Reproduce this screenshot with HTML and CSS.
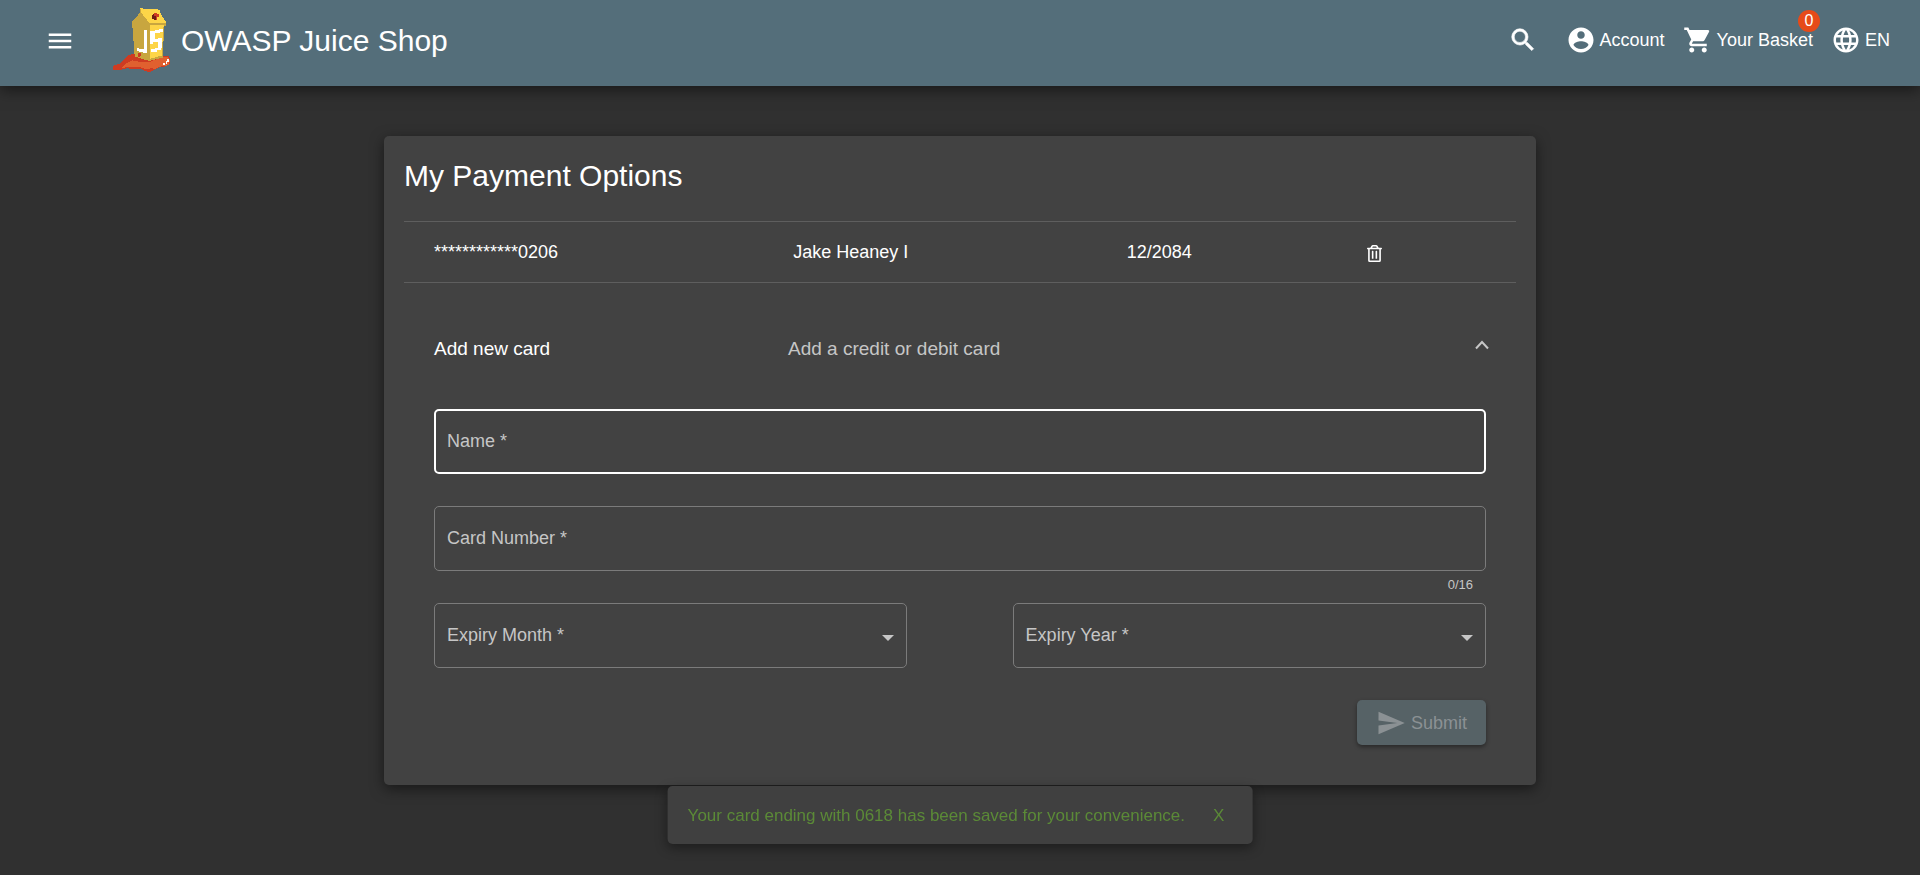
FILE: index.html
```html
<!DOCTYPE html>
<html lang="en">
<head>
<meta charset="utf-8">
<title>OWASP Juice Shop</title>
<link rel="stylesheet" href="styles.css">
</head>
<body>
<header class="toolbar">
  <button class="icon-button menu-button" type="button" aria-label="Open sidenav">
    <svg class="icon" viewBox="0 0 24 24"><path d="M3 18h18v-2H3v2zm0-5h18v-2H3v2zm0-7v2h18V6H3z"/></svg>
  </button>
  <a class="brand" href="#">
    <svg class="logo" viewBox="36 21 180 198" shape-rendering="crispEdges">
      <path fill="#ce3b22" d="M39 198L60 190 72 178 84 165 104 162 148 176 188 167 205 168 211 180 209 192 198 199 178 202 162 210 150 217 138 214 125 208 80 205 60 210 39 210z"/>
      <path fill="#e0602f" d="M62 205L74 194 84 187 98 180 104 184 148 186 190 170 203 170 210 182 205 196 180 200 162 208 156 204 140 208 120 202 90 200z"/>
      <path fill="#fff" d="M201 177h6v9h-6v6h-3v-9h3zM189 190h6v4h-6z"/>
      <path fill="#c8a63f" d="M122 36L97 64 98 100 102 135 104 170 148 183 152 72z"/>
      <path fill="#fdd548" d="M121 24h9v3h45v3h6v9L192 57 198 66V72H147L126 45 121 38z"/>
      <path fill="#c8a63f" d="M121 27h3v12l25 31h48v7h-4L188 173 148 183V72L119 42z"/>
      <path fill="#fdd548" d="M151 74H191L185 167 151 176z"/>
      <path fill="#ce3b22" d="M162 39h8v3h6v10h-5v7h-9v-3h-6V45h6zM114 160h8v3h2v6h-3v3h-6z"/>
      <path fill="#6d1e14" d="M159 43h4v6h6v10h-7v-3h-6V46h3z"/>
      <path fill="#fff" d="M132 90h9v69h-12v-3h-11v-3h-6v-9h6v3h14zM158 92h6v-3h12v-3h12v10h-9v3h-15v17h9v-3h12v6h1v25h-4v6h-12v6h-17v-9h12v-3h9v-18h-15v6h-9V93h4z"/>
    </svg>
    <span class="brand-name">OWASP Juice Shop</span>
  </a>
  <nav class="actions">
    <button class="icon-button search-button" type="button" aria-label="Search">
      <svg class="icon" viewBox="0 0 24 24"><path stroke="currentColor" stroke-width=".5" d="M15.500 14h-.79l-.28-.27A6.471 6.471 0 0 0 16 9.500 6.500 6.500 0 1 0 9.500 16c1.610 0 3.090-.59 4.230-1.570l.27.28v.79l5 4.990L20.490 19l-4.990-5zm-6 0C7.010 14 5 11.990 5 9.500S7.010 5 9.500 5 14 7.010 14 9.500 11.990 14 9.500 14z"/></svg>
    </button>
    <button class="action" type="button">
      <svg class="icon" viewBox="0 0 24 24"><path d="M12 2C6.480 2 2 6.480 2 12s4.480 10 10 10 10-4.480 10-10S17.520 2 12 2zm0 3c1.660 0 3 1.340 3 3s-1.340 3-3 3-3-1.340-3-3 1.340-3 3-3zm0 14.200c-2.500 0-4.710-1.280-6-3.220.03-1.990 4-3.080 6-3.080 1.990 0 5.970 1.090 6 3.080-1.290 1.940-3.500 3.220-6 3.220z"/></svg>
      <span>Account</span>
    </button>
    <button class="action" type="button">
      <svg class="icon" viewBox="0 0 24 24"><path d="M7 18c-1.100 0-1.990.9-1.990 2S5.900 22 7 22s2-.9 2-2-.9-2-2-2zM1 2v2h2l3.600 7.590-1.350 2.450c-.16.28-.25.61-.25.96 0 1.100.9 2 2 2h12v-2H7.420c-.14 0-.25-.11-.25-.25l.03-.12.9-1.630h7.450c.75 0 1.410-.41 1.750-1.030l3.580-6.490A1.003 1.003 0 0 0 20 4H5.210l-.94-2H1zm16 16c-1.100 0-1.990.9-1.990 2s.89 2 1.990 2 2-.9 2-2-.9-2-2-2z"/></svg>
      <span class="basket-label">Your Basket<span class="badge">0</span></span>
    </button>
    <button class="action" type="button">
      <svg class="icon" viewBox="0 0 24 24"><path d="M11.990 2C6.470 2 2 6.480 2 12s4.470 10 9.990 10C17.520 22 22 17.520 22 12S17.520 2 11.990 2zm6.930 6h-2.950a15.650 15.650 0 0 0-1.380-3.560A8.030 8.030 0 0 1 18.920 8zM12 4.040c.83 1.200 1.480 2.530 1.910 3.960h-3.820c.43-1.430 1.080-2.760 1.910-3.960zM4.260 14C4.100 13.360 4 12.690 4 12s.1-1.360.26-2h3.380c-.08.66-.14 1.320-.14 2s.06 1.340.14 2H4.260zm.82 2h2.950c.32 1.250.78 2.450 1.380 3.560A7.987 7.987 0 0 1 5.080 16zm2.950-8H5.080a7.987 7.987 0 0 1 4.330-3.560A15.650 15.650 0 0 0 8.030 8zM12 19.960c-.83-1.200-1.480-2.530-1.910-3.960h3.820c-.43 1.430-1.080 2.760-1.910 3.960zM14.340 14H9.660c-.09-.66-.16-1.320-.16-2s.07-1.350.16-2h4.680c.09.65.16 1.320.16 2s-.07 1.340-.16 2zm.25 5.560c.6-1.110 1.060-2.310 1.380-3.560h2.950a8.030 8.030 0 0 1-4.330 3.560zM16.360 14c.08-.66.14-1.320.14-2s-.06-1.340-.14-2h3.380c.16.64.26 1.310.26 2s-.1 1.360-.26 2h-3.380z"/></svg>
      <span>EN</span>
    </button>
  </nav>
</header>

<main class="card">
  <h1 class="title">My Payment Options</h1>
  <table class="cards">
    <tbody>
      <tr>
        <td class="col-number">************0206</td>
        <td class="col-name">Jake Heaney I</td>
        <td class="col-expiry">12/2084</td>
        <td class="col-remove">
          <button class="remove" type="button" aria-label="Delete card">
            <svg class="trash" viewBox="0 0 448 512"><path d="M268 416h24a12 12 0 0 0 12-12V188a12 12 0 0 0-12-12h-24a12 12 0 0 0-12 12v216a12 12 0 0 0 12 12zM432 80h-82.410l-34-56.700A48 48 0 0 0 274.410 0H173.590a48 48 0 0 0-41.160 23.300L98.410 80H16A16 16 0 0 0 0 96v16a16 16 0 0 0 16 16h16v336a48 48 0 0 0 48 48h288a48 48 0 0 0 48-48V128h16a16 16 0 0 0 16-16V96a16 16 0 0 0-16-16zM171.840 50.910A6 6 0 0 1 177 48h94a6 6 0 0 1 5.150 2.910L293.610 80H154.390zM368 464H80V128h288zm-212-48h24a12 12 0 0 0 12-12V188a12 12 0 0 0-12-12h-24a12 12 0 0 0-12 12v216a12 12 0 0 0 12 12z"/></svg>
          </button>
        </td>
      </tr>
    </tbody>
  </table>

  <section class="panel">
    <button class="panel-header" type="button" aria-expanded="true">
      <span class="panel-title">Add new card</span>
      <span class="panel-description">Add a credit or debit card</span>
      <svg class="chevron" viewBox="0 0 14 10"><path d="M1 8.500L7 2l6 6.500"/></svg>
    </button>
    <form class="form">
      <div class="field">
        <label class="label" for="name">Name *</label>
        <input class="control focused" id="name" type="text">
      </div>
      <div class="field">
        <label class="label" for="number">Card Number *</label>
        <input class="control" id="number" type="text" maxlength="16">
      </div>
      <div class="hint">0/16</div>
      <div class="expiry">
        <div class="field half">
          <label class="label" for="month">Expiry Month *</label>
          <select class="control" id="month"><option value=""></option></select>
          <svg class="arrow" viewBox="0 0 12 6"><path d="M0 0h12L6 6z"/></svg>
        </div>
        <div class="field half">
          <label class="label" for="year">Expiry Year *</label>
          <select class="control" id="year"><option value=""></option></select>
          <svg class="arrow" viewBox="0 0 12 6"><path d="M0 0h12L6 6z"/></svg>
        </div>
      </div>
      <button class="submit" type="submit" disabled>
        <svg class="icon" viewBox="0 0 24 24"><path d="M2.010 21L23 12 2.010 3 2 10l15 2-15 2z"/></svg>
        <span>Submit</span>
      </button>
    </form>
  </section>
</main>

<div class="toast" role="status">
  <span>Your card ending with 0618 has been saved for your convenience.</span>
  <button class="toast-close" type="button">X</button>
</div>
</body>
</html>
```

FILE: styles.css
```css
* {
  box-sizing: border-box;
}

body {
  margin: 0;
  min-height: 100vh;
  background: #303030;
  color: #fff;
  font: 18px/24px "Liberation Sans", Arial, sans-serif;
}

button,
input,
select {
  margin: 0;
  padding: 0;
  border: 0;
  background: none;
  color: inherit;
  font: inherit;
}

svg {
  display: block;
  flex: none;
  fill: currentColor;
}

.icon {
  width: 30px;
  height: 30px;
}

.toolbar {
  display: flex;
  align-items: flex-start;
  height: 86px;
  padding: 0 30px 0 45px;
  background: #546e7a;
  box-shadow: 0 4px 14px rgba(0, 0, 0, 0.5);
}

.menu-button {
  margin: 26px 37px 0 0;
}

.brand {
  display: flex;
  align-items: flex-start;
  gap: 9px;
  color: inherit;
  text-decoration: none;
}

.logo {
  width: 60px;
  height: 66px;
  margin-top: 7px;
}

.brand-name {
  margin-top: 23px;
  font-size: 30px;
  line-height: 36px;
}

.actions {
  display: flex;
  align-items: center;
  gap: 18px;
  margin: 25px 0 0 auto;
}

.search-button {
  margin-right: 10px;
}

.action {
  display: flex;
  align-items: center;
  gap: 4px;
}

.basket-label {
  position: relative;
}

.badge {
  position: absolute;
  top: -18px;
  right: -7px;
  width: 22px;
  height: 22px;
  border-radius: 50%;
  background: #e64a19;
  font-size: 16px;
  line-height: 22px;
  text-align: center;
}

.card {
  width: 60%;
  margin: 50px auto 0;
  padding: 20px;
  border-radius: 5px;
  background: #424242;
  box-shadow: 0 4px 14px rgba(0, 0, 0, 0.5);
}

.title {
  margin: 0 0 25px;
  font-size: 30px;
  font-weight: 400;
  line-height: 40px;
}

.cards {
  width: 100%;
  table-layout: fixed;
  border-collapse: collapse;
}

.cards td {
  height: 61px;
  padding: 0;
  border-top: 1px solid #5e5e5e;
  border-bottom: 1px solid #5e5e5e;
}

.cards .col-number {
  width: 35%;
  padding-left: 30px;
}

.col-name {
  width: 30%;
}

.col-expiry {
  width: 21.6%;
}

.trash {
  width: 15px;
  height: 17px;
}

.remove {
  display: block;
  padding-top: 2px;
}

.panel {
  padding: 0 30px;
}

.panel-header {
  display: flex;
  align-items: center;
  width: 100%;
  margin-top: 34px;
  height: 64px;
  font-size: 19px;
  text-align: left;
}

.panel-title {
  width: 354px;
}

.panel-description {
  flex: 1;
  color: #c6c6c6;
}

.chevron {
  width: 14px;
  height: 10px;
  margin: 0 -3px 8px 0;
  fill: none;
  stroke: #c6c6c6;
  stroke-width: 2;
}

.form {
  display: flex;
  flex-direction: column;
  margin-top: 28px;
}

.field {
  display: grid;
  align-items: center;
  margin-bottom: 32px;
}

.field > * {
  grid-area: 1 / 1;
}

.label {
  z-index: 1;
  justify-self: start;
  margin: 0 0 2px 13px;
  color: #c6c6c6;
  pointer-events: none;
}

.control {
  width: 100%;
  height: 65px;
  padding: 0 13px;
  border: 1px solid #7b7b7b;
  border-radius: 5px;
  appearance: none;
}

.focused {
  border: 2px solid #fff;
}

.hint {
  height: 32px;
  margin-top: -32px;
  padding: 2px 13px 0 0;
  color: #c6c6c6;
  font-size: 13px;
  text-align: right;
}

.expiry {
  display: flex;
  justify-content: space-between;
}

.half {
  width: 45%;
}

.arrow {
  justify-self: end;
  width: 12px;
  height: 6px;
  margin: 4px 13px 0 0;
  fill: #c6c6c6;
  pointer-events: none;
}

.submit {
  display: flex;
  align-items: center;
  align-self: flex-end;
  gap: 5px;
  height: 45px;
  margin: 0 0 20px;
  padding: 0 19px;
  border-radius: 5px;
  background: #566266;
  box-shadow: 0 2px 4px rgba(0, 0, 0, 0.4);
  color: #8b9194;
}

.toast {
  position: fixed;
  bottom: 31px;
  left: 50%;
  display: flex;
  align-items: center;
  gap: 28px;
  height: 58px;
  padding: 1px 28px 0 20px;
  border-radius: 5px;
  background: #404040;
  box-shadow: 0 4px 12px rgba(0, 0, 0, 0.4);
  color: #5b8a37;
  font-size: 17px;
  white-space: nowrap;
  transform: translateX(-50%);
}
```
